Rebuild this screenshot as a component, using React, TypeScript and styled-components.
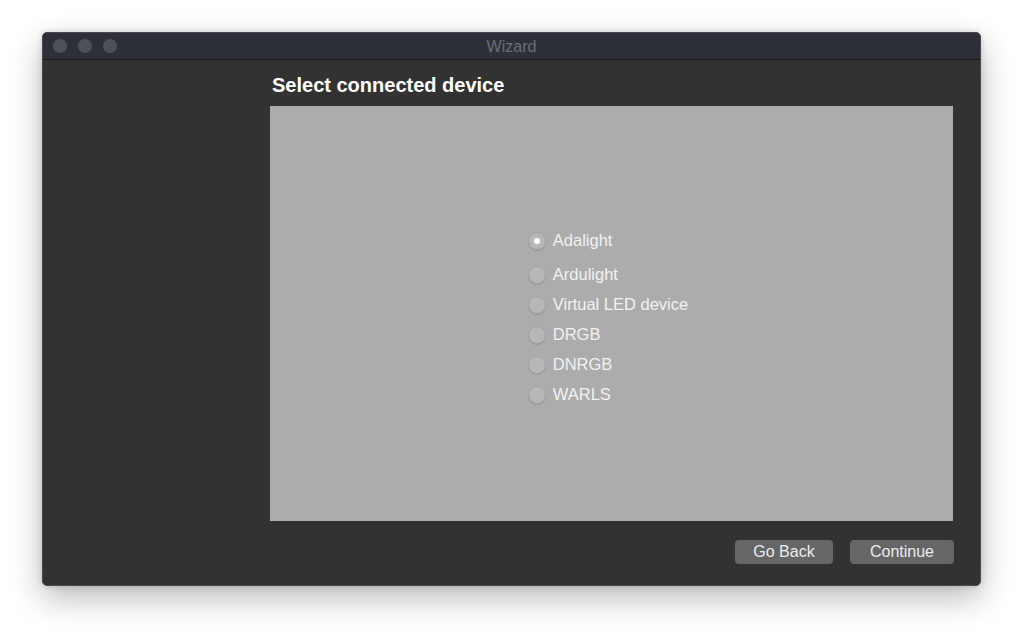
import React, { useState } from "react";
import styled, { createGlobalStyle } from "styled-components";

const GlobalStyle = createGlobalStyle`
  html, body {
    margin: 0;
    padding: 0;
    background: #ffffff;
    font-family: "Liberation Sans", Arial, sans-serif;
  }
`;

const Page = styled.div`
  width: 1023px;
  height: 638px;
  box-sizing: border-box;
  padding: 32px 42px 52px;
  display: flex;
`;

const Window = styled.div`
  flex: 1;
  display: flex;
  flex-direction: column;
  background: #323232;
  border: 1px solid #4a4a4c;
  border-radius: 5px;
  overflow: hidden;
  box-shadow: 0 12px 32px rgba(0, 0, 0, 0.28), 0 0 6px rgba(0, 0, 0, 0.15);
`;

const TitleBar = styled.div`
  height: 26px;
  display: flex;
  align-items: center;
  position: relative;
  background: #2d3038;
  border-bottom: 1px solid #17181b;
  padding-left: 10px;
  gap: 11px;
`;

const Light = styled.span`
  width: 14px;
  height: 14px;
  border-radius: 50%;
  background: #4e515a;
`;

const Title = styled.div`
  position: absolute;
  left: 0;
  right: 0;
  padding-top: 2px;
  text-align: center;
  font-size: 16px;
  color: #6c6e74;
  pointer-events: none;
`;

const Body = styled.div`
  flex: 1;
  display: grid;
  grid-template-columns: 227px 1fr;
  padding: 0 27px 21px 0;
`;

const Content = styled.div`
  display: flex;
  flex-direction: column;
`;

const Heading = styled.h1`
  margin: 14px 0 0 2px;
  height: 32px;
  font-size: 20px;
  font-weight: bold;
  color: #ffffff;
`;

const Panel = styled.div`
  flex: 1;
  background: #acacac;
  display: flex;
  align-items: center;
  justify-content: center;
  padding-top: 8px;
`;

const List = styled.div`
  display: flex;
  flex-direction: column;
  margin-left: -7px;
`;

const Option = styled.label<{ $first?: boolean }>`
  display: flex;
  align-items: center;
  gap: 7px;
  height: 30px;
  margin-bottom: ${(p) => (p.$first ? "4px" : "0")};
  font-size: 16.5px;
  color: #f2f2f2;
  cursor: default;
`;

const Circle = styled.span<{ $on: boolean }>`
  width: 18px;
  height: 18px;
  box-sizing: border-box;
  border-radius: 50%;
  background: #b7b7b7;
  border: 1px solid #a4a4a4;
  box-shadow: 0 1px 1px rgba(0, 0, 0, 0.12);
  display: flex;
  align-items: center;
  justify-content: center;
  &::after {
    content: "";
    width: 6px;
    height: 6px;
    border-radius: 50%;
    background: #ffffff;
    display: ${(p) => (p.$on ? "block" : "none")};
  }
`;

const Footer = styled.div`
  display: flex;
  justify-content: flex-end;
  gap: 17px;
  padding-top: 19px;
  margin-right: -1px;
`;

const Button = styled.button<{ $w: number }>`
  width: ${(p) => p.$w}px;
  height: 24px;
  border: 0;
  border-radius: 4px;
  background: #666666;
  color: #ececec;
  font-family: inherit;
  font-size: 16px;
  padding: 0;
`;

const devices = ["Adalight", "Ardulight", "Virtual LED device", "DRGB", "DNRGB", "WARLS"];

const App = () => {
  const [selected, setSelected] = useState("Adalight");
  return (
    <Page>
      <GlobalStyle />
      <Window>
        <TitleBar>
          <Light />
          <Light />
          <Light />
          <Title>Wizard</Title>
        </TitleBar>
        <Body>
          <div />
          <Content>
            <Heading>Select connected device</Heading>
            <Panel>
              <List>
                {devices.map((d, i) => (
                  <Option key={d} $first={i === 0} onClick={() => setSelected(d)}>
                    <Circle $on={selected === d} />
                    {d}
                  </Option>
                ))}
              </List>
            </Panel>
            <Footer>
              <Button $w={98}>Go Back</Button>
              <Button $w={104}>Continue</Button>
            </Footer>
          </Content>
        </Body>
      </Window>
    </Page>
  );
};

export default App;
